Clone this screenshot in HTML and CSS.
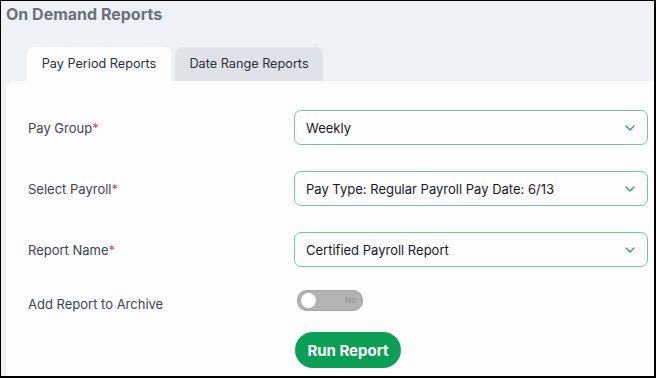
FILE: index.html
```html
<!DOCTYPE html>
<html lang="en">

<head>
    <title>On Demand Reports</title>
    <link rel="stylesheet" href="styles.css">
</head>

<body>
    <div class="frame">
        <h1 class="title">On Demand Reports</h1>

        <div class="tabs">
            <div class="tab active">Pay Period Reports</div>
            <div class="tab range">Date Range Reports</div>
        </div>

        <div class="panel">
            <div class="form-row">
                <label class="label">Pay Group<span class="req">*</span></label>
                <div class="select">
                    <span>Weekly</span>
                    <svg class="chevron" width="10" height="6" viewBox="0 0 10 6"><path d="M1 1l4 4 4-4" fill="none" stroke="#2e9e63" stroke-width="1.4" stroke-linecap="round" stroke-linejoin="round"/></svg>
                </div>
            </div>

            <div class="form-row">
                <label class="label">Select Payroll<span class="req">*</span></label>
                <div class="select">
                    <span>Pay Type: Regular Payroll Pay Date: 6/13</span>
                    <svg class="chevron" width="10" height="6" viewBox="0 0 10 6"><path d="M1 1l4 4 4-4" fill="none" stroke="#2e9e63" stroke-width="1.4" stroke-linecap="round" stroke-linejoin="round"/></svg>
                </div>
            </div>

            <div class="form-row">
                <label class="label">Report Name<span class="req">*</span></label>
                <div class="select">
                    <span>Certified Payroll Report</span>
                    <svg class="chevron" width="10" height="6" viewBox="0 0 10 6"><path d="M1 1l4 4 4-4" fill="none" stroke="#2e9e63" stroke-width="1.4" stroke-linecap="round" stroke-linejoin="round"/></svg>
                </div>
            </div>

            <div class="form-row toggle-row">
                <label class="label archive">Add Report to Archive</label>
                <div class="toggle">
                    <span class="knob"></span>
                    <span class="toggle-text">No</span>
                </div>
            </div>

            <div class="form-row button-row">
                <span></span>
                <div><button class="run-button">Run Report</button></div>
            </div>
        </div>
    </div>
</body>

</html>
```

FILE: styles.css
```css
html,
body {
    margin: 0;
    padding: 0;
}

body {
    font-family: Inter, "Noto Sans", Arial, sans-serif;
}

.frame {
    width: 656px;
    height: 378px;
    box-sizing: border-box;
    border: 1px solid #000;
    border-right-width: 2px;
    border-bottom-width: 2px;
    background-color: #eef2f7;
    overflow: hidden;
}

.title {
    margin: 0;
    padding: 3px 5px 0;
    font-size: 16px;
    line-height: 20px;
    font-weight: 700;
    color: #6b717c;
}

.tabs {
    display: flex;
    gap: 4px;
    margin-top: 23px;
    padding-left: 26px;
}

.tab {
    width: 144px;
    height: 34px;
    line-height: 34px;
    text-align: center;
    font-size: 12.7px;
    color: #2a313c;
    background-color: #dfe2e6;
    border-radius: 8px 8px 0 0;
    white-space: nowrap;
}

.tab.range {
    width: 148px;
}

.tab.active {
    background-color: #fdfdfd;
}

.panel {
    margin-left: 5px;
    padding: 29px 6px 20px 22px;
    background-color: #fdfdfd;
    border-radius: 8px 0 0 0;
    display: flex;
    flex-direction: column;
    gap: 26px;
}

.form-row {
    display: grid;
    grid-template-columns: 266px 1fr;
    align-items: center;
}

.label {
    font-size: 13px;
    color: #3d4450;
}

.req {
    color: #b35a62;
}

.select {
    height: 35px;
    box-sizing: border-box;
    border: 1px solid #72c997;
    border-radius: 7px;
    padding: 0 12px 0 11px;
    display: flex;
    align-items: center;
    justify-content: space-between;
    font-size: 13px;
    color: #16191f;
}

.toggle-row {
    margin-top: -4px;
}

.archive {
    padding-top: 7px;
}

.toggle {
    position: relative;
    margin-left: 3px;
    width: 66px;
    height: 21px;
    border-radius: 11px;
    background-color: #b3b3b3;
    box-shadow: inset 0 0 0 1px #a6a6a6;
}

.knob {
    position: absolute;
    left: 4px;
    top: 3px;
    width: 15px;
    height: 15px;
    border-radius: 50%;
    background-color: #fff;
}

.toggle-text {
    position: absolute;
    right: 7px;
    top: 0;
    line-height: 21px;
    font-size: 8px;
    color: #8c8c8c;
}

.button-row {
    margin-top: -6px;
}

.run-button {
    margin-left: 1px;
    height: 36px;
    width: 106px;
    border: none;
    border-radius: 18px;
    background-color: #0b9e55;
    color: #fff;
    font-family: Inter, "Noto Sans", Arial, sans-serif;
    font-size: 15px;
    font-weight: 700;
    cursor: pointer;
}
```
